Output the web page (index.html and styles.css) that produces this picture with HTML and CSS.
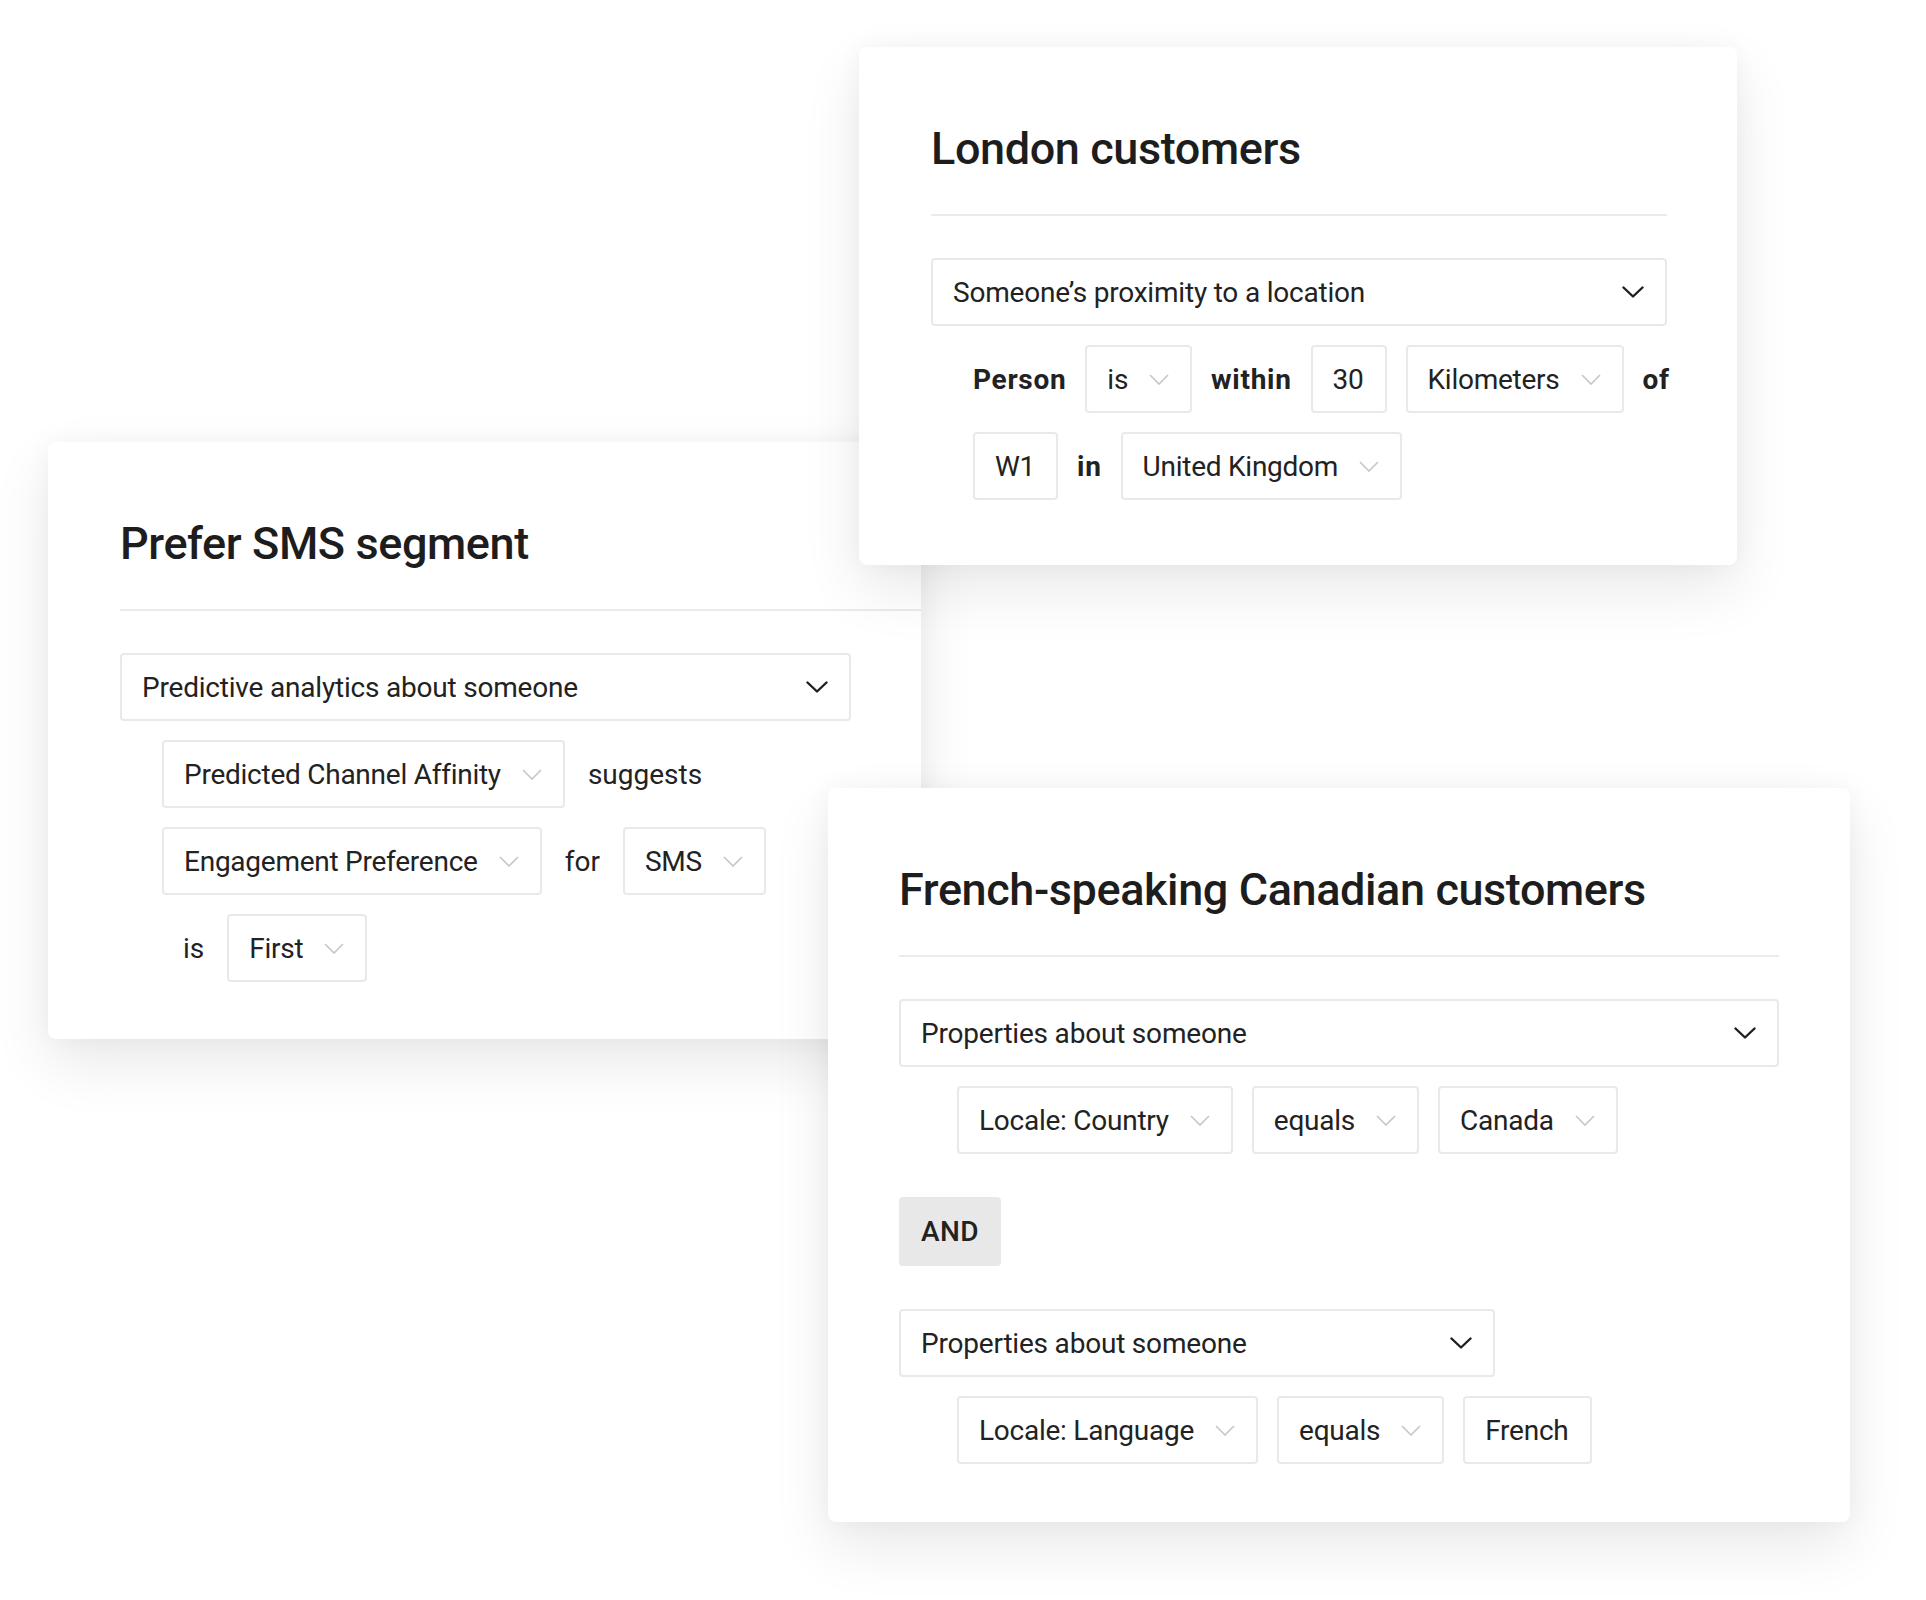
FILE: index.html
```html
<!DOCTYPE html>
<html>
  <head>
    <title>Segments</title>
    <meta charset="UTF-8">
    <link rel="stylesheet" href="styles.css">
  </head>
  <body>
    <div class="canvas">

      <section class="card card-sms">
        <h2 class="card-title">Prefer SMS segment</h2>
        <hr class="divider divider-bleed">
        <div class="select">
          <span>Predictive analytics about someone</span>
          <svg class="chev" viewBox="0 0 22 12"><polyline points="1.5,1.5 11,10.5 20.5,1.5"/></svg>
        </div>
        <div class="rows">
          <div class="row">
            <div class="box">Predicted Channel Affinity <svg class="chev-sm" viewBox="0 0 20 11"><polyline points="1,1 10,10 19,1"/></svg></div>
            <span class="word">suggests</span>
          </div>
          <div class="row">
            <div class="box">Engagement Preference <svg class="chev-sm" viewBox="0 0 20 11"><polyline points="1,1 10,10 19,1"/></svg></div>
            <span class="word">for</span>
            <div class="box">SMS <svg class="chev-sm" viewBox="0 0 20 11"><polyline points="1,1 10,10 19,1"/></svg></div>
          </div>
          <div class="row row-offset">
            <span class="word">is</span>
            <div class="box">First <svg class="chev-sm" viewBox="0 0 20 11"><polyline points="1,1 10,10 19,1"/></svg></div>
          </div>
        </div>
      </section>

      <section class="card card-london">
        <h2 class="card-title">London customers</h2>
        <hr class="divider">
        <div class="select">
          <span>Someone’s proximity to a location</span>
          <svg class="chev" viewBox="0 0 22 12"><polyline points="1.5,1.5 11,10.5 20.5,1.5"/></svg>
        </div>
        <div class="rows">
          <div class="row">
            <span class="word strong">Person</span>
            <div class="box">is <svg class="chev-sm" viewBox="0 0 20 11"><polyline points="1,1 10,10 19,1"/></svg></div>
            <span class="word strong">within</span>
            <div class="box">30</div>
            <div class="box">Kilometers <svg class="chev-sm" viewBox="0 0 20 11"><polyline points="1,1 10,10 19,1"/></svg></div>
            <span class="word strong">of</span>
          </div>
          <div class="row">
            <div class="box">W1</div>
            <span class="word strong">in</span>
            <div class="box">United Kingdom <svg class="chev-sm" viewBox="0 0 20 11"><polyline points="1,1 10,10 19,1"/></svg></div>
          </div>
        </div>
      </section>

      <section class="card card-french">
        <h2 class="card-title">French-speaking Canadian customers</h2>
        <hr class="divider">
        <div class="select">
          <span>Properties about someone</span>
          <svg class="chev" viewBox="0 0 22 12"><polyline points="1.5,1.5 11,10.5 20.5,1.5"/></svg>
        </div>
        <div class="rows">
          <div class="row">
            <div class="box">Locale: Country <svg class="chev-sm" viewBox="0 0 20 11"><polyline points="1,1 10,10 19,1"/></svg></div>
            <div class="box">equals <svg class="chev-sm" viewBox="0 0 20 11"><polyline points="1,1 10,10 19,1"/></svg></div>
            <div class="box">Canada <svg class="chev-sm" viewBox="0 0 20 11"><polyline points="1,1 10,10 19,1"/></svg></div>
          </div>
        </div>
        <div class="and">AND</div>
        <div class="select select-half">
          <span>Properties about someone</span>
          <svg class="chev" viewBox="0 0 22 12"><polyline points="1.5,1.5 11,10.5 20.5,1.5"/></svg>
        </div>
        <div class="rows">
          <div class="row">
            <div class="box">Locale: Language <svg class="chev-sm" viewBox="0 0 20 11"><polyline points="1,1 10,10 19,1"/></svg></div>
            <div class="box">equals <svg class="chev-sm" viewBox="0 0 20 11"><polyline points="1,1 10,10 19,1"/></svg></div>
            <div class="box">French</div>
          </div>
        </div>
      </section>

    </div>
  </body>
</html>
```

FILE: styles.css
```css
body {
  margin: 0;
  background-color: #FFFFFF;
  font-family: Roboto, "Liberation Sans", sans-serif;
  color: #222222;
}

.canvas {
  position: relative;
  width: 1926px;
  height: 1600px;
  overflow: hidden;
}

/* cards are loose windows on the canvas */
.card {
  position: absolute;
  box-sizing: border-box;
  background-color: white;
  border-radius: 8px;
  padding: 75px 70px 0 72px;
  box-shadow: 0 24px 60px rgba(0, 0, 0, 0.09), 0 0 24px rgba(0, 0, 0, 0.04);
}

.card-sms {
  left: 48px;
  top: 442px;
  width: 873px;
  height: 597px;
  z-index: 1;
}

.card-london {
  left: 859px;
  top: 47px;
  width: 878px;
  height: 518px;
  z-index: 2;
}

.card-french {
  left: 828px;
  top: 788px;
  width: 1022px;
  height: 734px;
  padding-left: 71px;
  padding-right: 71px;
  z-index: 3;
}

.card-title {
  margin: 0;
  font-size: 45px;
  line-height: 54px;
  font-weight: 500;
  letter-spacing: -0.4px;
  color: #1d1d1d;
}

.divider {
  border: none;
  height: 2px;
  background-color: #ebebeb;
  margin: 38px 0 42px 0;
}

.divider-bleed {
  margin-right: -70px;
}

.select {
  box-sizing: border-box;
  height: 68px;
  display: flex;
  align-items: center;
  justify-content: space-between;
  padding: 0 21px 0 20px;
  border: 2px solid #e9e9e9;
  border-radius: 4px;
  font-size: 28px;
  letter-spacing: -0.2px;
}

.select-half {
  width: 596px;
}

.chev {
  width: 22px;
  height: 12px;
  fill: none;
  stroke: #1f1f1f;
  stroke-width: 2.4;
  stroke-linecap: round;
  stroke-linejoin: round;
}

.rows {
  display: flex;
  flex-direction: column;
  gap: 19px;
  margin-top: 19px;
  padding-left: 42px;
}

.card-french .rows {
  padding-left: 58px;
}

.row {
  display: flex;
  align-items: center;
  gap: 19px;
}

.card-sms .row {
  gap: 23px;
}

.row-offset {
  padding-left: 21px;
}

.box {
  box-sizing: border-box;
  height: 68px;
  display: inline-flex;
  align-items: center;
  gap: 21px;
  padding: 0 21px 0 20px;
  border: 2px solid #e9e9e9;
  border-radius: 4px;
  font-size: 28px;
  letter-spacing: -0.25px;
  white-space: nowrap;
}

.chev-sm {
  width: 20px;
  height: 11px;
  fill: none;
  stroke: #c6c6c6;
  stroke-width: 1.6;
}

.word {
  font-size: 28px;
}

.strong {
  font-weight: 700;
  letter-spacing: 0.7px;
}

.and {
  display: inline-flex;
  align-items: center;
  box-sizing: border-box;
  height: 69px;
  margin: 43px 0 43px 0;
  padding: 0 22px;
  background-color: #e8e8e8;
  border-radius: 4px;
  font-size: 28px;
  font-weight: 500;
  letter-spacing: 0.4px;
}
```
